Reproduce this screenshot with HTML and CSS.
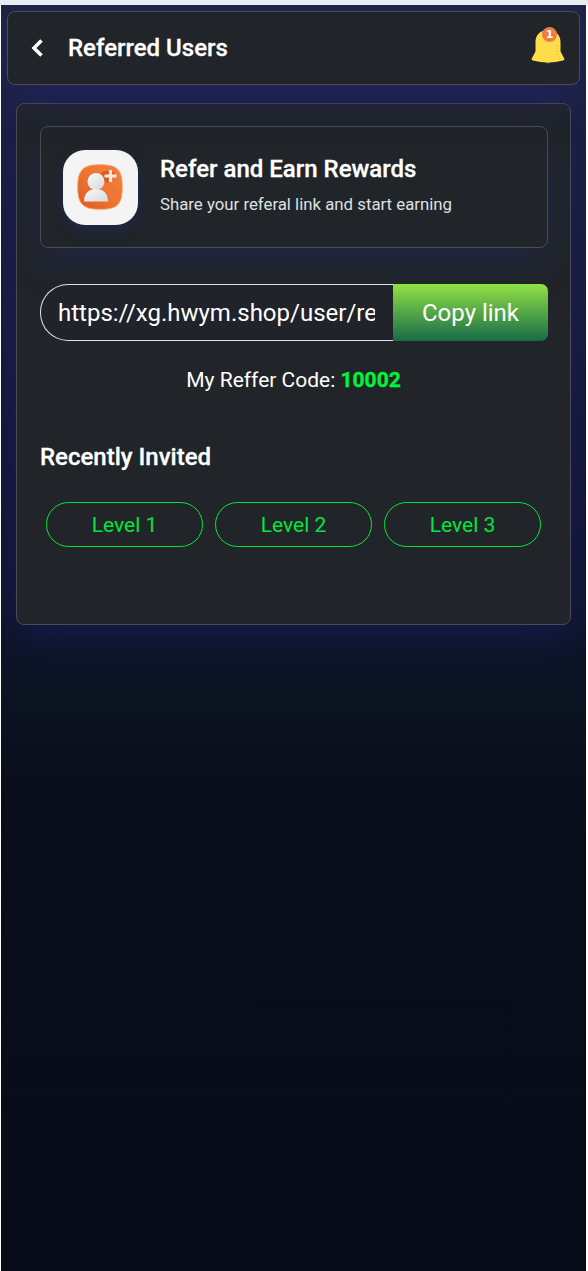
FILE: index.html
```html
<!DOCTYPE html>
<html lang="en">
<head>
<meta charset="utf-8">
<title>Referred Users</title>
<link rel="stylesheet" href="styles.css">
</head>
<body>
<div class="app">
  <header class="topbar panel">
    <svg class="back" viewBox="0 0 14 20" width="14" height="20"><path d="M11.500 2.500 4 10l7.500 7.500" fill="none" stroke="#fff" stroke-width="3.500"/></svg>
    <h1 class="title">Referred Users</h1>
    <div class="bell">
      <svg viewBox="0 0 34 38" width="34" height="38">
        <path d="M13 33h8q-1 3.500-4 3.500T13 33z" fill="#55705a"/>
        <path d="M17 3C9 3 4.500 8 4.500 15v9.500L1 31q-1 2 1 2.500 7 2 15 2t15-2q2-.5 1-2.500l-3.500-6.500V15C29.500 8 25 3 17 3z" fill="#ffdc4a"/>
        <path d="M26 18v8l3 5" fill="none" stroke="#f3ae35" stroke-dasharray="1 2"/>
      </svg>
      <span class="count">1</span>
    </div>
  </header>
  <main class="card panel">
    <section class="promo panel">
      <div class="promo-icon">
        <svg viewBox="0 0 46 46" width="46" height="46">
          <defs>
            <linearGradient id="tile" x1="1" y1="0" x2="0" y2="1"><stop offset="0" stop-color="#f38340"/><stop offset=".5" stop-color="#ee7433"/><stop offset="1" stop-color="#df591d"/></linearGradient>
            <linearGradient id="person" x1="0" y1="0" x2="1" y2="1"><stop offset="0" stop-color="#fafafa"/><stop offset="1" stop-color="#d5d7dc"/></linearGradient>
          </defs>
          <path d="M23 .7C40 .7 45.300 5 45.300 23S40 45.300 23 45.300.7 40 .7 23 6 .7 23 .7z" fill="url(#tile)" stroke="#f5a765" stroke-width=".8"/>
          <path d="M24 9Q29 5 38 8l-7 11-5-2z" fill="#df591d"/>
          <circle cx="19" cy="17.500" r="8.500" fill="url(#person)"/>
          <path d="M7 37.500C7 29 12 25 19 25s12 4 12 12.500z" fill="url(#person)"/>
          <path d="M33.500 6v12M27.500 12h12" stroke="#f7e9e2" stroke-width="3.200"/>
        </svg>
      </div>
      <div class="promo-text">
        <h2 class="promo-title">Refer and Earn Rewards</h2>
        <p class="promo-sub">Share your referal link and start earning</p>
      </div>
    </section>
    <div class="copy-row">
      <div class="link-box"><div class="link-text">https://xg.hwym.shop/user/re</div></div>
      <button class="copy">Copy link</button>
    </div>
    <p class="code">My Reffer Code: <span class="code-value">10002</span></p>
    <h2 class="recent">Recently Invited</h2>
    <nav class="levels">
      <button class="level">Level 1</button>
      <button class="level">Level 2</button>
      <button class="level">Level 3</button>
    </nav>
  </main>
</div>
</body>
</html>
```

FILE: styles.css
```css
* { box-sizing: border-box; }
body {
  margin: 0;
  padding: 5px 2px 0 1px;
  background: linear-gradient(#e9edf3 5px, #fff 5px);
  font-family: Roboto, sans-serif;
  color: #fff;
}
h1, h2, p { margin: 0; white-space: nowrap; }
h1, h2 { -webkit-text-stroke: .3px #fff; }
button { font-family: inherit; padding: 0; }
.app {
  height: 1266px;
  padding: 6px;
  overflow: hidden;
  background: linear-gradient(#202545 0, #1b203d 150px, #121734 450px, #0d1426 660px, #0b121f 715px, #0a0e1c 780px, #080d19 870px, #080c18 100%);
}
.panel {
  background: #212529;
  border: 1px solid #4a4d51;
  border-radius: 8px;
}
.topbar {
  position: relative;
  z-index: 1;
  width: 573px;
  height: 74px;
  padding: 0 14px 0 22px;
  display: flex;
  align-items: center;
  box-shadow: 0 14px 40px rgba(31, 37, 110, .5);
}
.back { margin-right: 24px; }
.title { font-size: 24px; font-weight: 500; line-height: 32px; }
.bell { position: relative; margin-left: auto; height: 38px; margin-top: -4px; }
.count {
  position: absolute;
  left: 11px;
  top: 0;
  width: 15px;
  height: 15px;
  border-radius: 50%;
  background: #f17b3d;
  font: bold 11px/15px "DejaVu Sans", sans-serif;
  text-align: center;
}
.card {
  width: 555px;
  height: 522px;
  margin: 18px 0 0 9px;
  padding: 22px 22px 0 23px;
  box-shadow: 0 8px 40px rgba(31, 31, 110, .6);
}
.promo {
  height: 122px;
  width: 508px;
  padding-left: 22px;
  display: flex;
  align-items: center;
  box-shadow: 0 14px 35px rgba(31, 37, 100, .4);
}
.promo-icon {
  width: 75px;
  height: 75px;
  padding-right: 2px;
  border-radius: 22px;
  background: #f4f4f4;
  display: flex;
  align-items: center;
  justify-content: center;
  box-shadow: 0 5px 12px rgba(31, 37, 110, .5);
}
.promo-text { margin-left: 22px; margin-top: -6px; }
.promo-title { font-size: 24px; font-weight: 500; line-height: 32px; }
.promo-sub { font-size: 16.8px; line-height: 24px; margin-top: 7px; color: #dee0e2; }
.copy-row { display: flex; width: 508px; height: 57px; margin-top: 36px; }
.link-box {
  width: 353px;
  padding: 1px 18px 0 17px;
  border: 1px solid #dee2e6;
  border-right: 0;
  border-radius: 28px 0 0 28px;
  background: #202329;
}
.link-text { overflow: hidden; white-space: nowrap; font-size: 24px; line-height: 54px; }
.copy {
  width: 155px;
  border: 0;
  border-radius: 0 7px 7px 0;
  background: linear-gradient(#92e143, #176c49);
  color: #fff;
  font-size: 24px;
}
.code { width: 507px; text-align: center; font-size: 21px; line-height: 30px; margin-top: 24px; }
.code-value { color: #00f53a; font-weight: 700; -webkit-text-stroke: .3px #00f53a; }
.recent { font-size: 24px; font-weight: 500; line-height: 32px; margin-top: 46px; }
.levels { display: flex; gap: 12px; margin: 29px 0 0 6px; }
.level {
  width: 157px;
  height: 45px;
  border: 1px solid #00e63a;
  border-radius: 23px;
  background: none;
  color: #00e63a;
  font-size: 21px;
}
```
